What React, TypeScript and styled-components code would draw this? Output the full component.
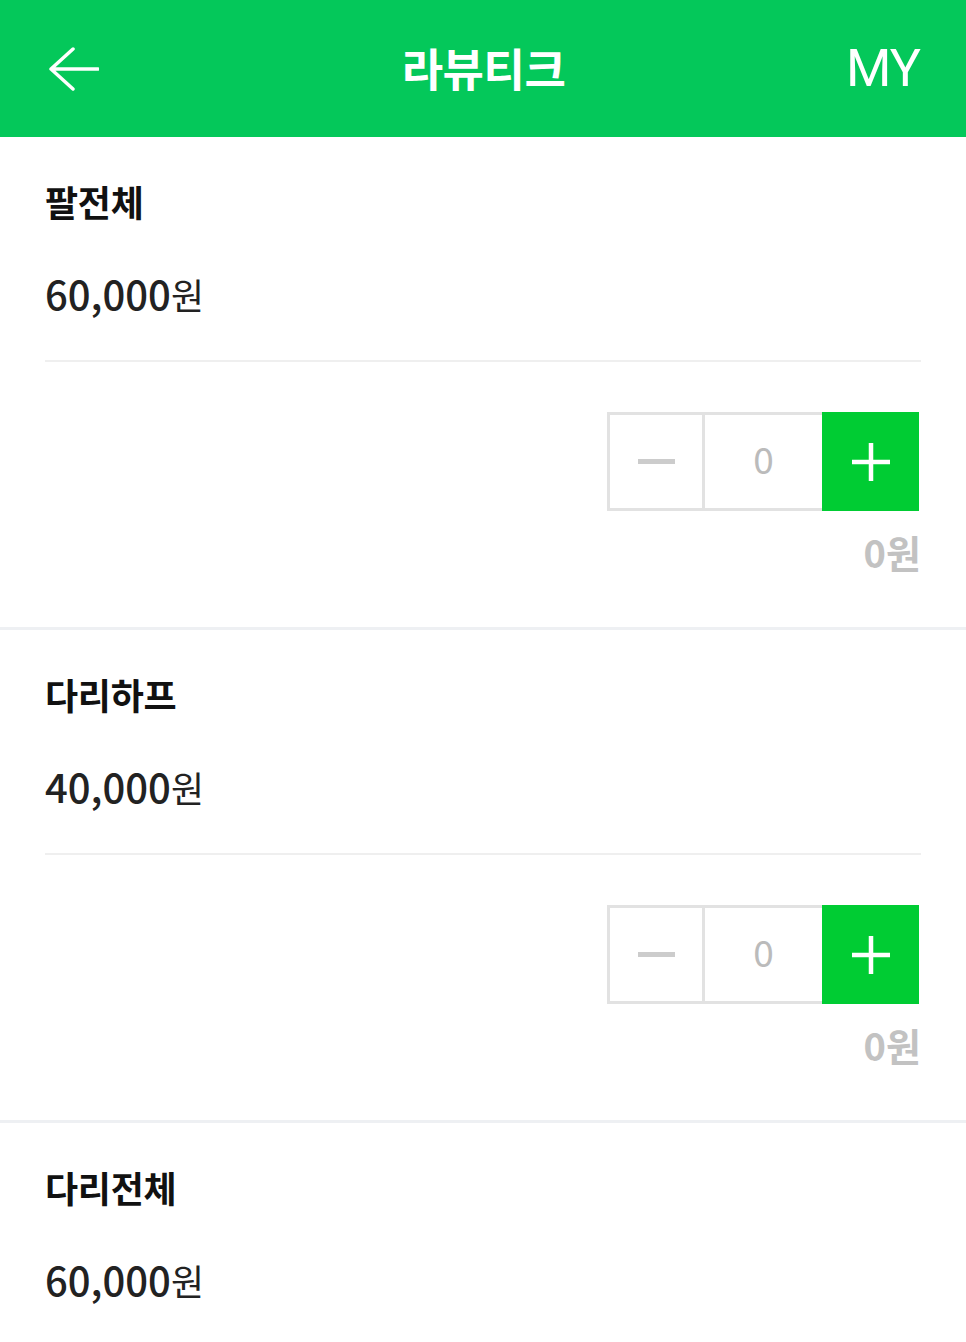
import React from 'react'
import styled, { createGlobalStyle } from 'styled-components'

const GlobalStyle = createGlobalStyle`
    body {
        margin: 0;
        background: #fff;
        font-family: 'Noto Sans CJK KR', 'Noto Sans', sans-serif;
    }
`

const Page = styled.div`
    width: 966px;
    background: #fff;
`

const Header = styled.header`
    height: 137px;
    background: #04c85a;
    padding: 0 46px 0 47px;
    box-sizing: border-box;
    display: grid;
    grid-template-columns: 1fr auto 1fr;
    align-items: center;
`

const BackButton = styled.button`
    justify-self: start;
    display: flex;
    background: none;
    border: 0;
    padding: 0;
    margin-top: 1px;
    cursor: pointer;
`

const Title = styled.h1`
    margin: 0;
    color: #fff;
    font-size: 45px;
    font-weight: 700;
    letter-spacing: -0.5px;
    line-height: 1;
    padding-bottom: 2px;
`

const MyLink = styled.a`
    justify-self: end;
    color: #fff;
    font-family: Roboto, 'Noto Sans', sans-serif;
    font-size: 52px;
    font-weight: 400;
    line-height: 1;
    text-decoration: none;
    letter-spacing: -1px;
`

const Item = styled.section`
    padding: 43px 45px 52px;
    border-bottom: 3px solid #eef0f3;
`

const ItemName = styled.h2`
    margin: 0;
    color: #111;
    font-size: 36px;
    font-weight: 700;
    line-height: 43px;
    letter-spacing: -0.3px;
`

const Price = styled.p`
    margin: 46px 0 0;
    color: #222;
    font-size: 40px;
    font-weight: 500;
    line-height: 48px;
    span {
        font-weight: 400;
        font-size: 36px;
    }
`

const Divider = styled.hr`
    margin: 42px 0 0;
    border: 0;
    height: 2px;
    background: #efefef;
`

const OrderRow = styled.div`
    display: flex;
    flex-direction: column;
    align-items: flex-end;
    margin-top: 50px;
`

const Stepper = styled.div`
    display: flex;
    height: 99px;
    margin-right: 2px;
`

const Cell = styled.div<{ $w: number }>`
    width: ${(p) => p.$w}px;
    box-sizing: border-box;
    display: flex;
    align-items: center;
    justify-content: center;
`

const MinusCell = styled(Cell)`
    border: 3px solid #e2e2e2;
`

const CountCell = styled(Cell)`
    border-top: 3px solid #e2e2e2;
    border-bottom: 3px solid #e2e2e2;
    color: #bbb;
    font-size: 37px;
    font-weight: 400;
    padding-bottom: 7px;
`

const PlusCell = styled(Cell)`
    background: #00cc33;
`

const MinusBar = styled.span`
    width: 37px;
    height: 5px;
    background: #cccccc;
`

const Total = styled.p`
    margin: 18px 0 0;
    color: #c2c2c2;
    font-size: 38px;
    font-weight: 700;
    line-height: 46px;
`

const items = [
    { name: '팔전체', price: '60,000' },
    { name: '다리하프', price: '40,000' },
    { name: '다리전체', price: '60,000' },
]

const ArrowIcon = () => (
    <svg width="52" height="44" viewBox="0 0 52 44" fill="none">
        <path d="M51 22H4M26 2L4 22l22 20" stroke="#fff" strokeWidth="3.5" strokeLinecap="round" strokeLinejoin="round" />
    </svg>
)

const PlusIcon = () => (
    <svg width="38" height="38" viewBox="0 0 38 38">
        <path d="M19 0v38M0 19h38" stroke="#fff" strokeWidth="4.5" />
    </svg>
)

export default function App() {
    return (
        <Page>
            <GlobalStyle />
            <Header>
                <BackButton aria-label="back">
                    <ArrowIcon />
                </BackButton>
                <Title>라뷰티크</Title>
                <MyLink href="#">MY</MyLink>
            </Header>
            {items.map((item) => (
                <Item key={item.name}>
                    <ItemName>{item.name}</ItemName>
                    <Price>
                        {item.price}
                        <span>원</span>
                    </Price>
                    <Divider />
                    <OrderRow>
                        <Stepper>
                            <MinusCell $w={98}>
                                <MinusBar />
                            </MinusCell>
                            <CountCell $w={117}>0</CountCell>
                            <PlusCell $w={97}>
                                <PlusIcon />
                            </PlusCell>
                        </Stepper>
                        <Total>0원</Total>
                    </OrderRow>
                </Item>
            ))}
        </Page>
    )
}
